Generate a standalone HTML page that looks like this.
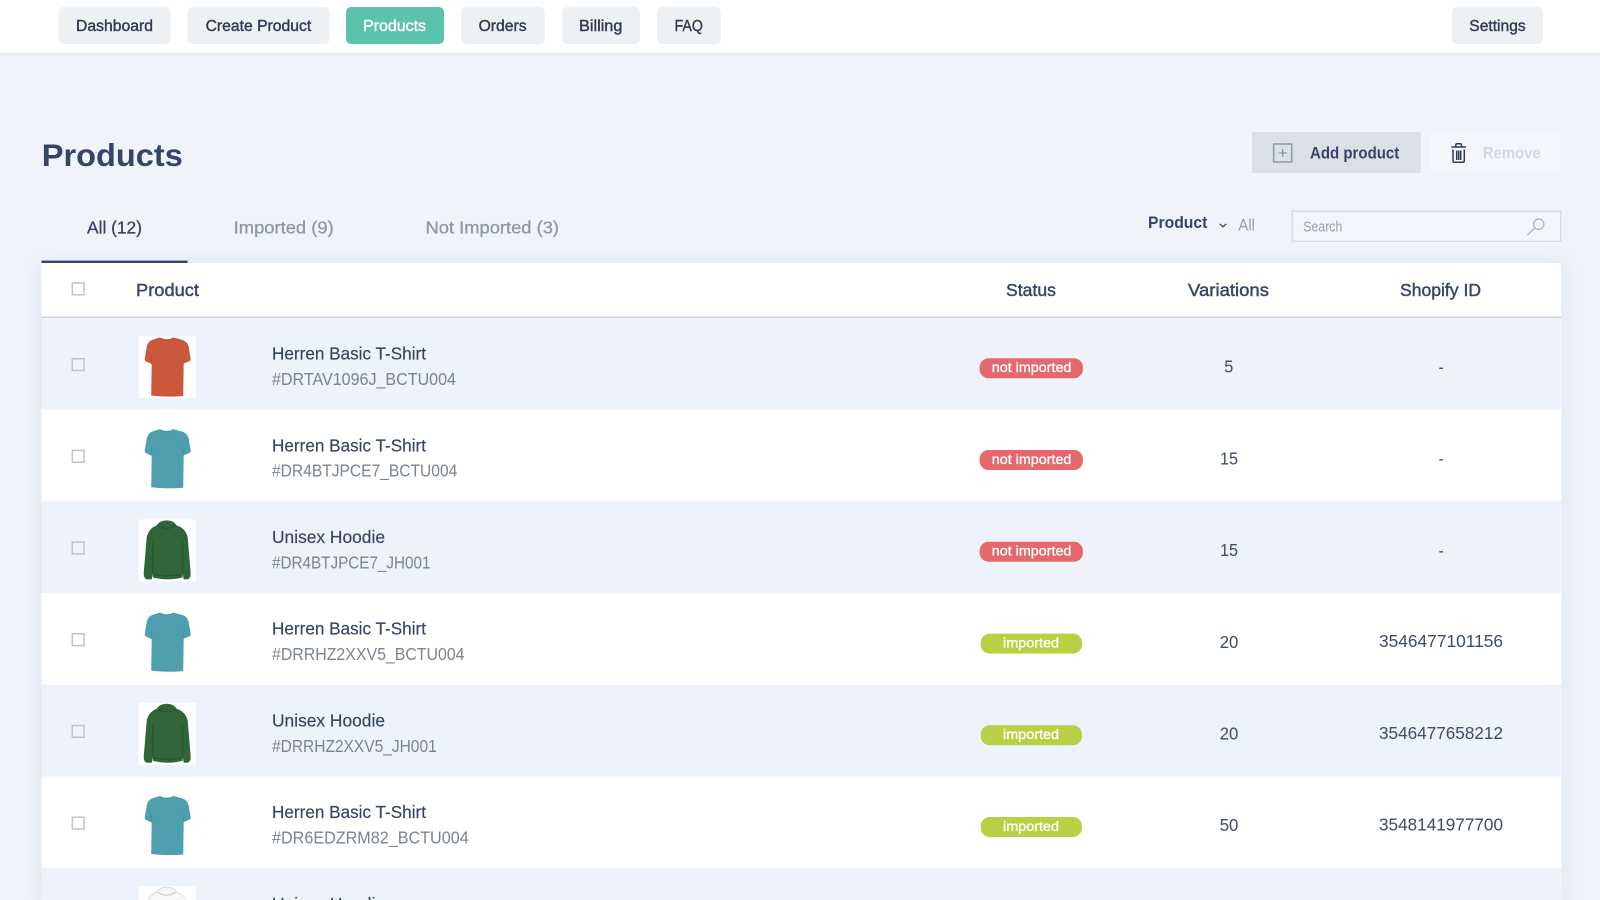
<!DOCTYPE html>
<html lang="en"><head><meta charset="utf-8"><title>Products</title>
<style>
html,body{margin:0;padding:0;width:1600px;height:900px;overflow:hidden;background:#f0f3fa}
svg{display:block;filter:blur(.3px)}
text{font-family:"Liberation Sans",sans-serif;white-space:pre}
.nav{font-size:15.5px;fill:#2f3b52;stroke:#2f3b52;stroke-width:.4}
.tab{font-size:17.5px;fill:#8e97a6;stroke:#8e97a6;stroke-width:.3}
.th{font-size:17.5px;fill:#364565;stroke:#364565;stroke-width:.42}
.name{font-size:17.8px;fill:#36435f;stroke:#36435f;stroke-width:.15}
.sku{font-size:17.8px;fill:#7b8490}
.num{font-size:17.8px;fill:#3e4c66}
.badge{font-size:13.5px;fill:#fff;stroke:#fff;stroke-width:.35}
.cb{fill:none;stroke:#bcc3cf;stroke-width:1.5}
</style></head><body>
<svg xmlns="http://www.w3.org/2000/svg" width="1600" height="900" viewBox="0 0 1600 900">
<defs>
<filter id="sh" x="-5%" y="-5%" width="110%" height="110%"><feDropShadow dx="0" dy="3" stdDeviation="9" flood-color="#3c4b6e" flood-opacity=".1"/></filter>
<clipPath id="c7"><rect x="0" y="0" width="1600" height="31.8"/></clipPath>
<g id="shirt">
<path d="M21 1.5Q28 5 35 1.5L44 4Q49 6 50 11L52 23Q52 25 50 25.5L45 27.5L44.5 60Q29 61.5 12.5 59.5L13 28L7.5 25.5Q6 25 6 23L8 11Q9 6 13 4Z"/>
<path d="M21 1.5Q28 7 35 1.5M13 28L12.5 19M45 27.5L45.5 19" fill="none" stroke="#000" stroke-opacity=".1" stroke-width="1"/>
</g>
<g id="hoodie">
<path d="M28 1Q35 1 38 6Q47 9 49 18L52 54Q52 59 49 60L45 60L44 54L44 58Q29 62 14 58L14 54L13 60L8 60Q5 59 5 54L8 18Q10 9 18 6Q21 1 28 1Z"/>
<path d="M19 6Q28 12 37 6M14 54L14 22M44 54L44 22M14 55Q29 58 44 55" fill="none" stroke="#000" stroke-opacity=".18" stroke-width="1"/>
</g>
</defs>

<rect width="1600" height="900" fill="#f0f3fa"/>
<rect width="1600" height="53.5" fill="#fff"/>
<rect y="53" width="1600" height="1.5" fill="#e4e8ee"/>

<g fill="#eef1f4">
<rect x="58.5" y="7" width="112" height="37" rx="5"/>
<rect x="187.5" y="7" width="142" height="37" rx="5"/>
<rect x="461" y="7" width="84" height="37" rx="5"/>
<rect x="562" y="7" width="78" height="37" rx="5"/>
<rect x="657" y="7" width="64" height="37" rx="5"/>
<rect x="1452" y="7" width="91" height="37" rx="5"/>
</g>
<rect x="346" y="7" width="98" height="37" rx="5" fill="#5bc2ac"/>
<text class="nav" x="76" y="31" textLength="77" lengthAdjust="spacingAndGlyphs">Dashboard</text>
<text class="nav" x="205.6" y="31" textLength="105.6" lengthAdjust="spacingAndGlyphs">Create Product</text>
<text class="nav" x="363" y="31" textLength="63" lengthAdjust="spacingAndGlyphs" style="fill:#fff;stroke:#fff">Products</text>
<text class="nav" x="478.6" y="31" textLength="48" lengthAdjust="spacingAndGlyphs">Orders</text>
<text class="nav" x="579" y="31" textLength="43.4" lengthAdjust="spacingAndGlyphs">Billing</text>
<text class="nav" x="674.5" y="31" textLength="28.5" lengthAdjust="spacingAndGlyphs">FAQ</text>
<text class="nav" x="1469.3" y="31" textLength="56.4" lengthAdjust="spacingAndGlyphs">Settings</text>

<text x="41.8" y="166" font-size="31.5" font-weight="700" fill="#364565" textLength="141" lengthAdjust="spacingAndGlyphs">Products</text>

<rect x="1252" y="132" width="168.7" height="41" fill="#dbe0e7"/>
<rect x="1430" y="132" width="131" height="41" fill="#f4f6fb"/>
<rect x="1273.7" y="144" width="18" height="18" fill="none" stroke="#8f99aa" stroke-width="1.5"/>
<path d="M1282.7 149V157M1278.7 153H1286.7" stroke="#8f99aa" stroke-width="1.3" fill="none"/>
<text x="1310" y="158.6" font-size="16.5" font-weight="700" fill="#364565" textLength="89.3" lengthAdjust="spacingAndGlyphs">Add product</text>
<path d="M1451.3 147H1466M1455.8 146.5V145Q1455.8 143.8 1457 143.8H1460.3Q1461.5 143.8 1461.5 145V146.5M1453 149.5V161Q1453 162.3 1454.3 162.3H1463Q1464.3 162.3 1464.3 161V149.5M1456.7 150.5V160M1458.7 150.5V160M1460.7 150.5V160" fill="none" stroke="#2f3b52" stroke-width="1.5"/>
<text x="1482.7" y="158.6" font-size="16.5" font-weight="700" fill="#d3d8df" textLength="58" lengthAdjust="spacingAndGlyphs">Remove</text>

<text class="tab" x="87" y="233.5" textLength="55" lengthAdjust="spacingAndGlyphs" style="fill:#364565;stroke:#364565">All (12)</text>
<text class="tab" x="233.7" y="233.5" textLength="100" lengthAdjust="spacingAndGlyphs">Imported (9)</text>
<text class="tab" x="425.5" y="233.5" textLength="133.5" lengthAdjust="spacingAndGlyphs">Not Imported (3)</text>

<text x="1148" y="228.2" font-size="17" font-weight="700" fill="#364565" textLength="59.4" lengthAdjust="spacingAndGlyphs">Product</text>
<path d="M1219.8 223.8L1223 226.8L1226.2 223.8" fill="none" stroke="#364565" stroke-width="1.3"/>
<text x="1238.3" y="230.7" font-size="17" fill="#98a0ad" textLength="16.7" lengthAdjust="spacingAndGlyphs">All</text>
<rect x="1292.2" y="211.2" width="268.6" height="30" fill="#f2f5fb" stroke="#ccd2dc"/>
<text x="1303.3" y="231.3" font-size="14.5" fill="#98a0ad" textLength="39" lengthAdjust="spacingAndGlyphs">Search</text>
<circle cx="1538.7" cy="224.2" r="5.2" fill="none" stroke="#a9b0bc" stroke-width="1.2"/>
<path d="M1534.8 228L1527.3 235" fill="none" stroke="#a9b0bc" stroke-width="1.2"/>

<rect x="41.5" y="263" width="1519.8" height="637" fill="#fff" filter="url(#sh)"/>
<rect x="41.5" y="260.6" width="146" height="2.4" fill="#364565"/>
<rect x="41.5" y="316.5" width="1519.8" height="1.5" fill="#cdd3dc"/>
<rect class="cb" x="72.3" y="283" width="11.8" height="11.8"/>
<text class="th" x="136" y="296" textLength="63" lengthAdjust="spacingAndGlyphs">Product</text>
<text class="th" x="1006" y="296" textLength="50" lengthAdjust="spacingAndGlyphs">Status</text>
<text class="th" x="1188" y="296" textLength="81" lengthAdjust="spacingAndGlyphs">Variations</text>
<text class="th" x="1400" y="296" textLength="81" lengthAdjust="spacingAndGlyphs">Shopify ID</text>

<!-- row 1 -->
<g transform="translate(0,318)">
<rect x="41.5" width="1519.8" height="91.7" fill="#eef2fa"/>
<rect class="cb" x="72.3" y="40.7" width="11.8" height="11.8"/>
<rect x="138.7" y="18" width="57.3" height="62" fill="#fff"/>
<use href="#shirt" x="138.7" y="18" fill="#c9583c"/>
<text class="name" x="272" y="41.6" textLength="154" lengthAdjust="spacingAndGlyphs">Herren Basic T-Shirt</text>
<text class="sku" x="272" y="67" textLength="184" lengthAdjust="spacingAndGlyphs">#DRTAV1096J_BCTU004</text>
<rect x="979.6" y="40.3" width="103.3" height="20" rx="9" fill="#e4686c"/>
<text class="badge" x="991.8" y="54.2" textLength="79.6" lengthAdjust="spacingAndGlyphs">not imported</text>
<text class="num" x="1224.3" y="54.7" textLength="9" lengthAdjust="spacingAndGlyphs">5</text>
<text class="num" x="1438.6" y="55" textLength="5" lengthAdjust="spacingAndGlyphs">-</text>
</g>
<!-- row 2 -->
<g transform="translate(0,409.7)">
<rect x="41.5" width="1519.8" height="91.7" fill="#fff"/>
<rect class="cb" x="72.3" y="40.7" width="11.8" height="11.8"/>
<use href="#shirt" x="138.7" y="18" fill="#4f9fae"/>
<text class="name" x="272" y="41.6" textLength="154" lengthAdjust="spacingAndGlyphs">Herren Basic T-Shirt</text>
<text class="sku" x="272" y="67" textLength="185.3" lengthAdjust="spacingAndGlyphs">#DR4BTJPCE7_BCTU004</text>
<rect x="979.6" y="40.3" width="103.3" height="20" rx="9" fill="#e4686c"/>
<text class="badge" x="991.8" y="54.2" textLength="79.6" lengthAdjust="spacingAndGlyphs">not imported</text>
<text class="num" x="1220" y="54.7" textLength="18" lengthAdjust="spacingAndGlyphs">15</text>
<text class="num" x="1438.6" y="55" textLength="5" lengthAdjust="spacingAndGlyphs">-</text>
</g>
<!-- row 3 -->
<g transform="translate(0,501.4)">
<rect x="41.5" width="1519.8" height="91.7" fill="#eef2fa"/>
<rect class="cb" x="72.3" y="40.7" width="11.8" height="11.8"/>
<rect x="138.7" y="18" width="57.3" height="62" fill="#fff"/>
<use href="#hoodie" x="138.7" y="18" fill="#2f6538"/>
<text class="name" x="272" y="41.6" textLength="113" lengthAdjust="spacingAndGlyphs">Unisex Hoodie</text>
<text class="sku" x="272" y="67" textLength="158.5" lengthAdjust="spacingAndGlyphs">#DR4BTJPCE7_JH001</text>
<rect x="979.6" y="40.3" width="103.3" height="20" rx="9" fill="#e4686c"/>
<text class="badge" x="991.8" y="54.2" textLength="79.6" lengthAdjust="spacingAndGlyphs">not imported</text>
<text class="num" x="1220" y="54.7" textLength="18" lengthAdjust="spacingAndGlyphs">15</text>
<text class="num" x="1438.6" y="55" textLength="5" lengthAdjust="spacingAndGlyphs">-</text>
</g>
<!-- row 4 -->
<g transform="translate(0,593.1)">
<rect x="41.5" width="1519.8" height="91.7" fill="#fff"/>
<rect class="cb" x="72.3" y="40.7" width="11.8" height="11.8"/>
<use href="#shirt" x="138.7" y="18" fill="#4f9fae"/>
<text class="name" x="272" y="41.6" textLength="154" lengthAdjust="spacingAndGlyphs">Herren Basic T-Shirt</text>
<text class="sku" x="272" y="67" textLength="192.5" lengthAdjust="spacingAndGlyphs">#DRRHZ2XXV5_BCTU004</text>
<rect x="980.7" y="40.5" width="101.3" height="20" rx="9" fill="#b9d045"/>
<text class="badge" x="1003" y="54.3" textLength="56" lengthAdjust="spacingAndGlyphs">imported</text>
<text class="num" x="1219.7" y="54.7" textLength="18.6" lengthAdjust="spacingAndGlyphs">20</text>
<text class="num" x="1379" y="54" textLength="124" lengthAdjust="spacingAndGlyphs">3546477101156</text>
</g>
<!-- row 5 -->
<g transform="translate(0,684.8)">
<rect x="41.5" width="1519.8" height="91.7" fill="#eef2fa"/>
<rect class="cb" x="72.3" y="40.7" width="11.8" height="11.8"/>
<rect x="138.7" y="18" width="57.3" height="62" fill="#fff"/>
<use href="#hoodie" x="138.7" y="18" fill="#2f6538"/>
<text class="name" x="272" y="41.6" textLength="113" lengthAdjust="spacingAndGlyphs">Unisex Hoodie</text>
<text class="sku" x="272" y="67" textLength="164.7" lengthAdjust="spacingAndGlyphs">#DRRHZ2XXV5_JH001</text>
<rect x="980.7" y="40.5" width="101.3" height="20" rx="9" fill="#b9d045"/>
<text class="badge" x="1003" y="54.3" textLength="56" lengthAdjust="spacingAndGlyphs">imported</text>
<text class="num" x="1219.7" y="54.7" textLength="18.6" lengthAdjust="spacingAndGlyphs">20</text>
<text class="num" x="1379" y="54" textLength="124" lengthAdjust="spacingAndGlyphs">3546477658212</text>
</g>
<!-- row 6 -->
<g transform="translate(0,776.5)">
<rect x="41.5" width="1519.8" height="91.7" fill="#fff"/>
<rect class="cb" x="72.3" y="40.7" width="11.8" height="11.8"/>
<use href="#shirt" x="138.7" y="18" fill="#4f9fae"/>
<text class="name" x="272" y="41.6" textLength="154" lengthAdjust="spacingAndGlyphs">Herren Basic T-Shirt</text>
<text class="sku" x="272" y="67" textLength="196.7" lengthAdjust="spacingAndGlyphs">#DR6EDZRM82_BCTU004</text>
<rect x="980.7" y="40.5" width="101.3" height="20" rx="9" fill="#b9d045"/>
<text class="badge" x="1003" y="54.3" textLength="56" lengthAdjust="spacingAndGlyphs">imported</text>
<text class="num" x="1219.7" y="54.7" textLength="18.6" lengthAdjust="spacingAndGlyphs">50</text>
<text class="num" x="1379" y="54" textLength="124" lengthAdjust="spacingAndGlyphs">3548141977700</text>
</g>
<!-- row 7 -->
<g transform="translate(0,868.2)" clip-path="url(#c7)">
<rect x="41.5" width="1519.8" height="31.8" fill="#eef2fa"/>
<rect x="138.7" y="18" width="57.3" height="13.8" fill="#fff"/>
<use href="#hoodie" x="138.7" y="18" fill="#f7f7f8" stroke="#d6d8dc" stroke-width=".8"/>
<text class="name" x="272" y="41.6" textLength="113" lengthAdjust="spacingAndGlyphs">Unisex Hoodie</text>
</g>
</svg>
</body></html>
